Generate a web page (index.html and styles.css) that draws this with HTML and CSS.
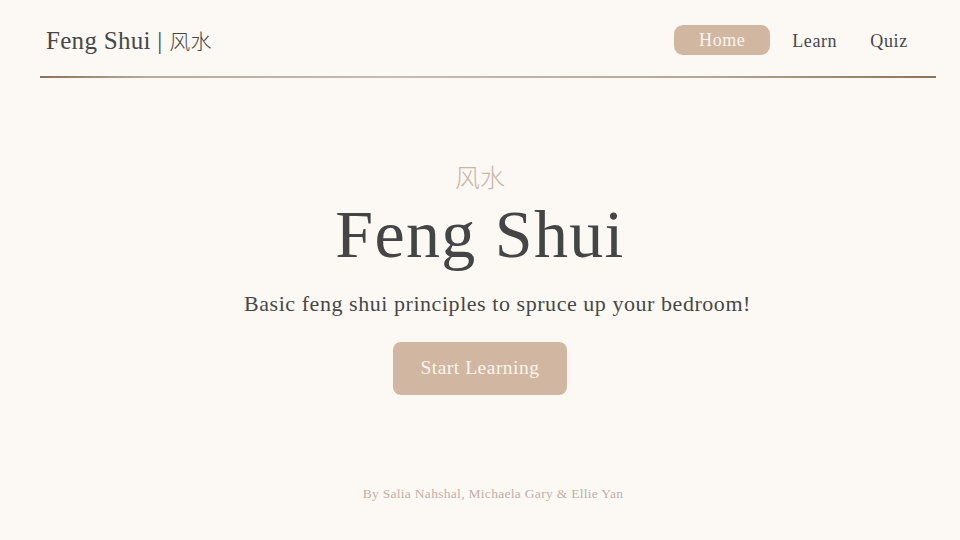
FILE: index.html
```html
<!DOCTYPE html>
<html lang="en">
<head>
<meta charset="utf-8">
<title>Feng Shui</title>
<link rel="stylesheet" href="styles.css">
</head>
<body>
<div class="page">
  <header class="topbar">
    <div class="brand">Feng Shui | <span class="cjk">风水</span></div>
    <nav class="nav">
      <a class="nav-link active" href="#">Home</a>
      <a class="nav-link learn" href="#">Learn</a>
      <a class="nav-link quiz" href="#">Quiz</a>
    </nav>
  </header>
  <div class="rule"></div>
  <main class="hero">
    <div class="hero-cjk">风水</div>
    <h1 class="hero-title">Feng Shui</h1>
    <p class="hero-sub">Basic feng shui principles to spruce up your bedroom!</p>
    <a class="cta" href="#">Start Learning</a>
  </main>
  <footer class="credits">By Salia Nahshal, Michaela Gary &amp; Ellie Yan</footer>
</div>
</body>
</html>
```

FILE: styles.css
```css
* { box-sizing: border-box; }
html, body { margin: 0; padding: 0; }
body {
  background: #fcf9f5;
  font-family: "Liberation Serif", "Noto Sans CJK SC", serif;
  color: #464646;
  width: 960px;
  height: 540px;
  overflow: hidden;
}
.page {
  display: flex;
  flex-direction: column;
  height: 540px;
}
.topbar {
  display: flex;
  align-items: center;
  justify-content: space-between;
  height: 76px;
  padding: 0 52px 0 46px;
}
.brand {
  font-size: 25px;
  letter-spacing: 0.3px;
  color: #474747;
  margin-top: 4px;
}
.cjk {
  font-family: "Noto Sans CJK SC", sans-serif;
  font-weight: 300;
  font-size: 21px;
}
.nav {
  display: flex;
  align-items: center;
  margin-top: 4px;
}
.nav-link {
  font-size: 18px;
  letter-spacing: 0.6px;
  color: #474747;
  text-decoration: none;
  line-height: 24px;
  padding-top: 2px;
}
.nav-link.learn { margin-left: 22px; }
.nav-link.quiz { margin-left: 33px; letter-spacing: 0.7px; }
.nav-link.active {
  background: #d1b7a1;
  color: #fbf4ee;
  width: 96px;
  text-align: center;
  height: 30px;
  line-height: 24px;
  padding-top: 3px;
  border-radius: 9px;
}
.rule {
  height: 1.5px;
  margin: 0 24px 0 40px;
  background: linear-gradient(90deg, #8a7358 0%, #b9aa99 12%, #c8bcb0 40%, #b5a594 75%, #8a7358 100%);
}
.hero {
  display: flex;
  flex-direction: column;
  align-items: center;
  padding-top: 83px;
}
.hero-cjk {
  font-family: "Noto Sans CJK SC", sans-serif;
  font-weight: 300;
  font-size: 25px;
  color: #cbb3a8;
  line-height: 30px;
}
.hero-title {
  margin: 2px 0 0 0;
  font-weight: 400;
  font-size: 68px;
  letter-spacing: 1.3px;
  line-height: 82px;
  color: #454545;
}
.hero-sub {
  margin: 15px 0 0 35px;
  font-size: 22px;
  letter-spacing: 0.55px;
  line-height: 28px;
  color: #474747;
}
.cta {
  margin-top: 24px;
  display: flex;
  align-items: center;
  justify-content: center;
  width: 174px;
  height: 53px;
  border-radius: 8px;
  background: #d1b7a1;
  color: #fbf4ee;
  font-size: 19.5px;
  letter-spacing: 0.5px;
  text-decoration: none;
}
.credits {
  margin-top: auto;
  margin-bottom: 38px;
  margin-left: 26px;
  text-align: center;
  font-size: 13.5px;
  color: #c3aea5;
  letter-spacing: 0.3px;
}
```
